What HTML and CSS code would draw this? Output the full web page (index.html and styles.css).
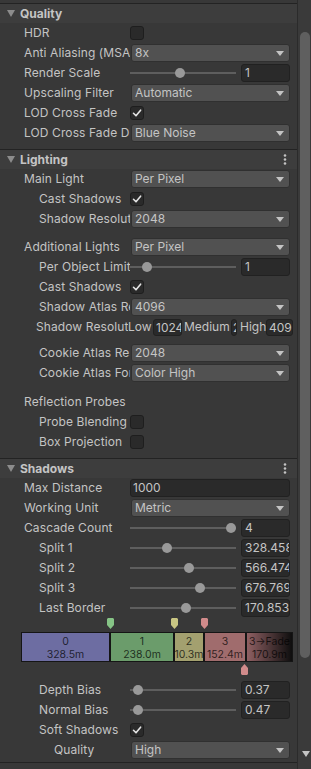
FILE: index.html
```html
<!DOCTYPE html>
<html>
<head>
<meta charset="utf-8">
<link rel="stylesheet" href="styles.css">
</head>
<body>
<div class="panel">
  <div class="content">
    <div class="top-gap"></div>

    <section class="section">
      <div class="header">
        <svg class="fold" width="8" height="7" viewBox="0 0 8 7"><polygon points="0,0 8,0 4,7"/></svg>
        <span class="title">Quality</span>
      </div>
      <div class="body">
        <div class="row"><div class="label">HDR</div><div class="ctrl"><div class="check"></div></div></div>
        <div class="row"><div class="label">Anti Aliasing (MSAA)</div><div class="ctrl"><div class="dropdown"><span>8x</span><svg class="arrow" width="8" height="5" viewBox="0 0 8 5"><polygon points="0,0 8,0 4,5"/></svg></div></div></div>
        <div class="row"><div class="label">Render Scale</div><div class="ctrl"><div class="slider"><div class="track"><div class="thumb" style="left:45px"></div></div></div><div class="field num">1</div></div></div>
        <div class="row"><div class="label">Upscaling Filter</div><div class="ctrl"><div class="dropdown"><span>Automatic</span><svg class="arrow" width="8" height="5" viewBox="0 0 8 5"><polygon points="0,0 8,0 4,5"/></svg></div></div></div>
        <div class="row"><div class="label">LOD Cross Fade</div><div class="ctrl"><div class="check"><svg width="10" height="10" viewBox="0 0 10 10"><polyline points="1.5,5.3 4,7.8 8.6,2.2"/></svg></div></div></div>
        <div class="row"><div class="label">LOD Cross Fade Dithering Type</div><div class="ctrl"><div class="dropdown"><span>Blue Noise</span><svg class="arrow" width="8" height="5" viewBox="0 0 8 5"><polygon points="0,0 8,0 4,5"/></svg></div></div></div>
      </div>
    </section>

    <section class="section">
      <div class="header">
        <svg class="fold" width="8" height="7" viewBox="0 0 8 7"><polygon points="0,0 8,0 4,7"/></svg>
        <span class="title">Lighting</span>
        <svg class="kebab" width="4" height="11" viewBox="0 0 4 11"><circle cx="2" cy="1.5" r="1.3"/><circle cx="2" cy="5.5" r="1.3"/><circle cx="2" cy="9.5" r="1.3"/></svg>
      </div>
      <div class="body">
        <div class="row"><div class="label">Main Light</div><div class="ctrl"><div class="dropdown"><span>Per Pixel</span><svg class="arrow" width="8" height="5" viewBox="0 0 8 5"><polygon points="0,0 8,0 4,5"/></svg></div></div></div>
        <div class="row"><div class="label i1">Cast Shadows</div><div class="ctrl"><div class="check"><svg width="10" height="10" viewBox="0 0 10 10"><polyline points="1.5,5.3 4,7.8 8.6,2.2"/></svg></div></div></div>
        <div class="row"><div class="label i1">Shadow Resolution</div><div class="ctrl"><div class="dropdown"><span>2048</span><svg class="arrow" width="8" height="5" viewBox="0 0 8 5"><polygon points="0,0 8,0 4,5"/></svg></div></div></div>
        <div class="spacer s8"></div>
        <div class="row"><div class="label">Additional Lights</div><div class="ctrl"><div class="dropdown"><span>Per Pixel</span><svg class="arrow" width="8" height="5" viewBox="0 0 8 5"><polygon points="0,0 8,0 4,5"/></svg></div></div></div>
        <div class="row"><div class="label i1">Per Object Limit</div><div class="ctrl"><div class="slider"><div class="track"><div class="thumb" style="left:12px"></div></div></div><div class="field num">1</div></div></div>
        <div class="row"><div class="label i1">Cast Shadows</div><div class="ctrl"><div class="check"><svg width="10" height="10" viewBox="0 0 10 10"><polyline points="1.5,5.3 4,7.8 8.6,2.2"/></svg></div></div></div>
        <div class="row"><div class="label i1">Shadow Atlas Resolution</div><div class="ctrl"><div class="dropdown"><span>4096</span><svg class="arrow" width="8" height="5" viewBox="0 0 8 5"><polygon points="0,0 8,0 4,5"/></svg></div></div></div>
        <div class="row tiers">
          <div class="label tier-head">Shadow Resolution Tiers</div>
          <span class="tier-name low">Low</span><div class="field tf-low">1024</div>
          <span class="tier-name med">Medium</span><div class="field tf-med">2048</div>
          <span class="tier-name high">High</span><div class="field tf-high">4096</div>
        </div>
        <div class="spacer s6"></div>
        <div class="row"><div class="label i1">Cookie Atlas Resolution</div><div class="ctrl"><div class="dropdown"><span>2048</span><svg class="arrow" width="8" height="5" viewBox="0 0 8 5"><polygon points="0,0 8,0 4,5"/></svg></div></div></div>
        <div class="row"><div class="label i1">Cookie Atlas Format</div><div class="ctrl"><div class="dropdown"><span>Color High</span><svg class="arrow" width="8" height="5" viewBox="0 0 8 5"><polygon points="0,0 8,0 4,5"/></svg></div></div></div>
        <div class="spacer s9"></div>
        <div class="row"><div class="label wide">Reflection Probes</div></div>
        <div class="row"><div class="label i1">Probe Blending</div><div class="ctrl"><div class="check"></div></div></div>
        <div class="row"><div class="label i1">Box Projection</div><div class="ctrl"><div class="check"></div></div></div>
      </div>
    </section>

    <section class="section">
      <div class="header">
        <svg class="fold" width="8" height="7" viewBox="0 0 8 7"><polygon points="0,0 8,0 4,7"/></svg>
        <span class="title">Shadows</span>
        <svg class="kebab" width="4" height="11" viewBox="0 0 4 11"><circle cx="2" cy="1.5" r="1.3"/><circle cx="2" cy="5.5" r="1.3"/><circle cx="2" cy="9.5" r="1.3"/></svg>
      </div>
      <div class="body last">
        <div class="row"><div class="label">Max Distance</div><div class="ctrl"><div class="field wide-field">1000</div></div></div>
        <div class="row"><div class="label">Working Unit</div><div class="ctrl"><div class="dropdown"><span>Metric</span><svg class="arrow" width="8" height="5" viewBox="0 0 8 5"><polygon points="0,0 8,0 4,5"/></svg></div></div></div>
        <div class="row"><div class="label">Cascade Count</div><div class="ctrl"><div class="slider"><div class="track"><div class="thumb" style="left:96px"></div></div></div><div class="field num">4</div></div></div>
        <div class="row"><div class="label i1">Split 1</div><div class="ctrl"><div class="slider"><div class="track"><div class="thumb" style="left:32px"></div></div></div><div class="field num">328.4583</div></div></div>
        <div class="row"><div class="label i1">Split 2</div><div class="ctrl"><div class="slider"><div class="track"><div class="thumb" style="left:54px"></div></div></div><div class="field num">566.4743</div></div></div>
        <div class="row"><div class="label i1">Split 3</div><div class="ctrl"><div class="slider"><div class="track"><div class="thumb" style="left:65px"></div></div></div><div class="field num">676.7693</div></div></div>
        <div class="row"><div class="label i1">Last Border</div><div class="ctrl"><div class="slider"><div class="track"><div class="thumb" style="left:51px"></div></div></div><div class="field num">170.8534</div></div></div>

        <div class="cascade">
          <div class="lane lane-top">
            <svg class="marker" style="left:86px" width="7" height="11" viewBox="0 0 7 11"><polygon class="m-green" points="0,1 1,0 6,0 7,1 7,7 3.5,11 0,7"/></svg>
            <svg class="marker" style="left:150px" width="7" height="11" viewBox="0 0 7 11"><polygon class="m-yellow" points="0,1 1,0 6,0 7,1 7,7 3.5,11 0,7"/></svg>
            <svg class="marker" style="left:180px" width="7" height="11" viewBox="0 0 7 11"><polygon class="m-pink" points="0,1 1,0 6,0 7,1 7,7 3.5,11 0,7"/></svg>
          </div>
          <div class="bar">
            <div class="seg seg0"><div class="ln">0</div><div class="ln">328.5m</div></div>
            <div class="seg seg1"><div class="ln">1</div><div class="ln">238.0m</div></div>
            <div class="seg seg2"><div class="ln">2</div><div class="ln">10.3m</div></div>
            <div class="seg seg3"><div class="ln">3</div><div class="ln">152.4m</div></div>
            <div class="seg seg4"><div class="ln">3→Fade</div><div class="ln">170.9m</div></div>
          </div>
          <div class="lane lane-bottom">
            <svg class="marker bottom" style="left:220px" width="7" height="11" viewBox="0 0 7 11"><polygon class="m-pink" points="3.5,0 7,4 7,10 6,11 1,11 0,10 0,4"/></svg>
          </div>
        </div>

        <div class="row"><div class="label i1">Depth Bias</div><div class="ctrl"><div class="slider"><div class="track"><div class="thumb" style="left:3px"></div></div></div><div class="field num">0.37</div></div></div>
        <div class="row"><div class="label i1">Normal Bias</div><div class="ctrl"><div class="slider"><div class="track"><div class="thumb" style="left:3px"></div></div></div><div class="field num">0.47</div></div></div>
        <div class="row"><div class="label i1">Soft Shadows</div><div class="ctrl"><div class="check"><svg width="10" height="10" viewBox="0 0 10 10"><polyline points="1.5,5.3 4,7.8 8.6,2.2"/></svg></div></div></div>
        <div class="row"><div class="label i2">Quality</div><div class="ctrl"><div class="dropdown"><span>High</span><svg class="arrow" width="8" height="5" viewBox="0 0 8 5"><polygon points="0,0 8,0 4,5"/></svg></div></div></div>
      </div>
    </section>
    <div class="bottom-line"></div>
  </div>

  <div class="scrollbar">
    <div class="sb-thumb"></div>
    <div class="sb-fill"></div>
    <svg class="sb-arrow" width="8" height="6" viewBox="0 0 8 6"><polygon points="0,0 8,0 4,6"/></svg>
  </div>
</div>
</body>
</html>
```

FILE: styles.css
```css
* { box-sizing: border-box; }

body {
  margin: 0;
  width: 311px;
  height: 769px;
  overflow: hidden;
  background: #383838;
  color: #c4c4c4;
  font-family: Inter, "Noto Sans", "Liberation Sans", sans-serif;
  font-size: 12px;
}

.panel {
  display: flex;
  height: 769px;
}

.content {
  width: 297px;
  flex: none;
}

.top-gap { height: 3px; }

.section { border-top: 1px solid #232323; }

.header {
  height: 19px;
  background: #3d3d3d;
  display: flex;
  align-items: center;
  padding-left: 7px;
}

.fold { fill: #8c8c8c; flex: none; }

.title {
  margin-left: 5px;
  font-weight: 700;
  line-height: 19px;
}

.kebab {
  fill: #c4c4c4;
  margin-left: auto;
  margin-right: 10px;
}

.body { padding: 1px 0 5px; }
.body.last { padding-bottom: 1px; }

.row {
  display: flex;
  align-items: center;
  height: 18px;
  margin-bottom: 2px;
  padding-right: 7px;
}

.label {
  flex: none;
  width: 130px;
  padding-left: 24px;
  padding-right: 3px;
  overflow: hidden;
  white-space: nowrap;
  line-height: 18px;
  letter-spacing: 0.1px;
}
.label.i1 { padding-left: 39px; }
.label.i2 { padding-left: 54px; }
.label.wide { width: auto; }

.ctrl {
  flex: 1;
  min-width: 0;
  height: 18px;
  display: flex;
  align-items: center;
}

.dropdown {
  flex: 1;
  height: 18px;
  margin-left: 1px;
  background: #515151;
  border: 1px solid #303030;
  border-radius: 3px;
  display: flex;
  align-items: center;
  justify-content: space-between;
  padding: 0 5px 0 3px;
  line-height: 16px;
}

.arrow { fill: #c4c4c4; flex: none; }

.field {
  height: 18px;
  background: #2a2a2a;
  border: 1px solid #212121;
  border-radius: 3px;
  padding-left: 3px;
  line-height: 16px;
  overflow: hidden;
  white-space: nowrap;
}
.field.num { width: 49px; flex: none; }
.field.wide-field { flex: 1; padding-left: 2px; }

.slider {
  flex: 1;
  height: 18px;
  display: flex;
  align-items: center;
  margin-right: 5px;
}
.track {
  flex: 1;
  height: 2px;
  background: #5e5e5e;
  position: relative;
}
.thumb {
  position: absolute;
  top: -4px;
  width: 10px;
  height: 10px;
  border-radius: 50%;
  background: #999999;
}

.check {
  width: 14px;
  height: 14px;
  background: #2a2a2a;
  border: 1px solid #1e1e1e;
  border-radius: 3px;
  display: flex;
  align-items: center;
  justify-content: center;
}
.check polyline {
  fill: none;
  stroke: #e4e4e4;
  stroke-width: 1.6;
  stroke-linecap: round;
  stroke-linejoin: round;
}

.spacer.s6 { height: 6px; }
.spacer.s8 { height: 8px; }
.spacer.s9 { height: 9px; }

/* shadow resolution tiers row */
.tiers { padding-right: 0; }
.label.tier-head { width: 128px; padding-left: 36px; padding-right: 2px; }
.tier-name { flex: none; white-space: nowrap; line-height: 18px; overflow: hidden; }
.tier-name.low { width: 25px; }
.tier-name.med { width: 47px; margin-left: 2px; }
.tier-name.high { width: 26px; margin-left: 3px; }
.tiers .field { flex: none; height: 17px; padding-left: 2px; }
.field.tf-low { width: 29px; }
.field.tf-med { width: 6px; padding-left: 1px; }
.field.tf-high { width: 27px; }

/* cascade widget */
.cascade {
  height: 62px;
  padding-left: 21px;
  display: flex;
  flex-direction: column;
}
.lane { position: relative; }
.lane-top { height: 13px; }
.lane-bottom { height: 19px; }
.marker { position: absolute; top: -1px; }
.marker.bottom { top: 2px; }
.m-green { fill: #86c486; }
.m-yellow { fill: #c9c683; }
.m-pink { fill: #d18b8b; }

.bar {
  width: 272px;
  height: 30px;
  display: flex;
  gap: 2px;
  padding: 1px;
  background: #151515;
}
.seg {
  flex: none;
  overflow: hidden;
  white-space: nowrap;
  font-size: 10.5px;
  line-height: 13px;
  padding-top: 2px;
  color: rgba(0, 0, 0, 0.72);
}
.ln {
  display: flex;
  justify-content: center;
}
.seg0 { width: 87px; background: #6d6da2; }
.seg1 { width: 62px; background: #6b9c6b; }
.seg2 { width: 28px; background: #a3a06f; }
.seg3 { width: 40px; background: #a06c6d; }
.seg4 { flex: 1; background: linear-gradient(to right, #8f6063, #0e0e0e); }

.bottom-line { border-top: 1px solid #232323; }

/* scrollbar */
.scrollbar {
  flex: 1;
  border-left: 1px solid #2b2b2b;
  background: #3a3a3a;
  display: flex;
  flex-direction: column;
  padding: 32px 0 12px 2px;
}
.sb-thumb {
  width: 10px;
  height: 626px;
  border-radius: 5px;
  background: #5f5f5f;
  flex: none;
}
.sb-fill { flex: 1; }
.sb-arrow { fill: #c4c4c4; margin-left: 2px; flex: none; }
```
